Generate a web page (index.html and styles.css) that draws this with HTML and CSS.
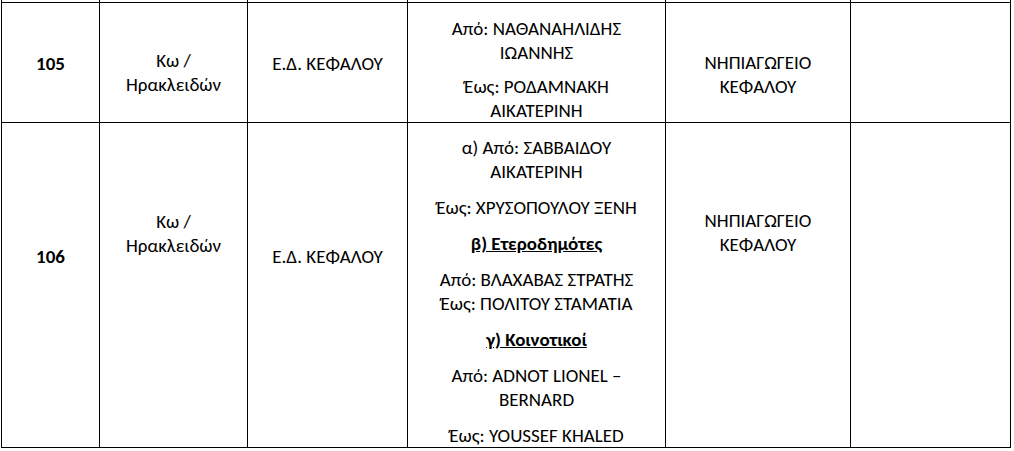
FILE: index.html
```html
<!DOCTYPE html>
<html lang="el">
<head>
<meta charset="utf-8">
<title>Πίνακας</title>
<link rel="stylesheet" href="styles.css">
</head>
<body>
<table class="grid">
  <tr class="stub">
    <td class="c1"></td><td class="c2"></td><td class="c3"></td><td class="c4"></td><td class="c5"></td><td class="c6"></td>
  </tr>
  <tr class="row-a">
    <td class="c1 num a-num">105</td>
    <td class="c2 a-area">Κω /<br>Ηρακλειδών</td>
    <td class="c3 a-dept">Ε.Δ. ΚΕΦΑΛΟΥ</td>
    <td class="c4 a-names">
      <p>Από: ΝΑΘΑΝΑΗΛΙΔΗΣ<br>ΙΩΑΝΝΗΣ</p>
      <p class="last">Έως: ΡΟΔΑΜΝΑΚΗ<br>ΑΙΚΑΤΕΡΙΝΗ</p>
    </td>
    <td class="c5 a-place">ΝΗΠΙΑΓΩΓΕΙΟ<br>ΚΕΦΑΛΟΥ</td>
    <td class="c6"></td>
  </tr>
  <tr class="row-b">
    <td class="c1 num b-num">106</td>
    <td class="c2 b-area">Κω /<br>Ηρακλειδών</td>
    <td class="c3 b-dept">Ε.Δ. ΚΕΦΑΛΟΥ</td>
    <td class="c4 b-names">
      <p>α) Από: ΣΑΒΒΑΙΔΟΥ<br>ΑΙΚΑΤΕΡΙΝΗ</p>
      <p>Έως: ΧΡΥΣΟΠΟΥΛΟΥ ΞΕΝΗ</p>
      <p class="group">β) Ετεροδημότες</p>
      <p>Από: ΒΛΑΧΑΒΑΣ ΣΤΡΑΤΗΣ<br>Έως: ΠΟΛΙΤΟΥ ΣΤΑΜΑΤΙΑ</p>
      <p class="group">γ) Κοινοτικοί</p>
      <p>Από: ADNOT LIONEL –<br>BERNARD</p>
      <p class="last">Έως: YOUSSEF KHALED</p>
    </td>
    <td class="c5 b-place">ΝΗΠΙΑΓΩΓΕΙΟ<br>ΚΕΦΑΛΟΥ</td>
    <td class="c6"></td>
  </tr>
</table>
</body>
</html>
```

FILE: styles.css
```css
html, body {
  margin: 0;
  padding: 0;
  background: #fff;
}

body {
  width: 1014px;
  height: 451px;
  overflow: hidden;
  font-family: Carlito, "Open Sans", "Noto Sans", sans-serif;
  font-size: 19px;
  line-height: 24px;
  color: #000;
}

.grid {
  margin-left: 1px;
  border-collapse: separate;
  border-spacing: 0;
  border-left: 1px solid #000;
  table-layout: fixed;
  width: 1009px;
}

.grid td {
  box-sizing: border-box;
  border-right: 1px solid #000;
  border-bottom: 1px solid #000;
  padding-left: 4px;
  padding-right: 4px;
  padding-bottom: 0;
  text-align: center;
  vertical-align: top;
  white-space: nowrap;
}

.c1 { width: 98px; }
.c2 { width: 148px; }
.c3 { width: 160px; }
.c4 { width: 258px; }
.c5 { width: 185px; }
.c6 { width: 160px; }

.stub td { height: 3px; padding-top: 0; }
.row-a td { height: 120px; }
.row-b td { height: 325px; }

.c6 { padding-top: 0; }

.num { font-weight: bold; }

.grid p {
  margin: 0 0 12px;
}

.a-names p { margin-bottom: 10px; }
.grid p.last { margin-bottom: 0; }
.a-names p.last { margin-bottom: -2px; }
.b-names p.last { margin-bottom: -2px; }

.group {
  font-weight: bold;
  text-decoration: underline;
}

/* vertical placement of each cell's text */
.a-num, .a-dept { padding-top: 49px; }
.a-area { padding-top: 46px; }
.a-names { padding-top: 14px; }
.a-place { padding-top: 48px; }

.b-num, .b-dept { padding-top: 122px; }
.b-area { padding-top: 87px; }
.b-names { padding-top: 13px; }
.b-place { padding-top: 86px; }
```
